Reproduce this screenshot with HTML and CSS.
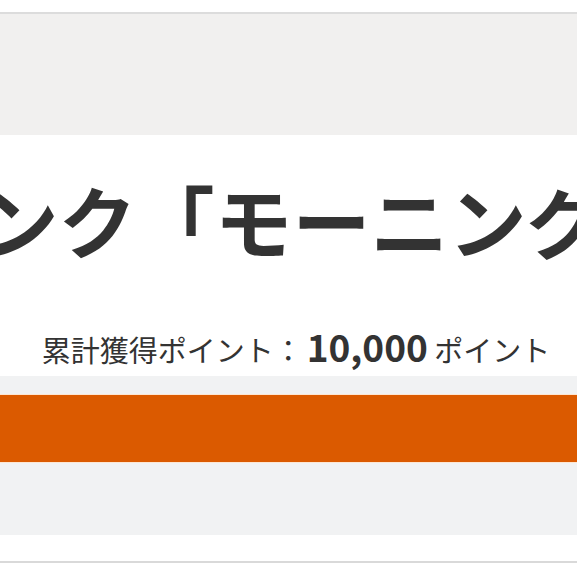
FILE: index.html
```html
<!DOCTYPE html>
<html lang="ja">
<head>
<meta charset="utf-8">
<link rel="stylesheet" href="styles.css">
</head>
<body>
<div class="top-gap"></div>
<section class="hero"></section>
<section class="card">
  <div class="title-row"><h1 class="title">ランク「モーニング」</h1></div>
  <p class="points">累計獲得ポイント：<strong class="points-num">10,000</strong> ポイント</p>
</section>
<section class="progress">
  <div class="bar"></div>
</section>
<div class="bottom-gap"></div>
<div class="footer-line"></div>
</body>
</html>
```

FILE: styles.css
```css
html, body {
  margin: 0;
  padding: 0;
  background: #ffffff;
  font-family: "Noto Sans CJK JP", "Noto Sans", sans-serif;
  color: #333333;
  overflow: hidden;
}
.top-gap { height: 12px; }
.hero {
  height: 121px;
  border-top: 2px solid #dcdcdc;
  background: #f1f0ef;
}
.card {
  height: 241px;
  background: #ffffff;
  display: flex;
  flex-direction: column;
  align-items: center;
}
.title-row {
  width: 100%;
  display: flex;
  justify-content: center;
  overflow: hidden;
  margin-top: 30px;
  padding-left: 8px;
  box-sizing: border-box;
}
.title {
  margin: 0;
  flex: none;
  white-space: nowrap;
  font-size: 78px;
  font-weight: 700;
  line-height: 1.4;
  color: #333333;
}
.points {
  margin: 50px 0 0 15px;
  font-size: 29px;
  line-height: 1.2;
  white-space: nowrap;
  color: #333333;
}
.points-num {
  font-size: 37px;
  font-weight: 700;
  margin-left: 4px;
}
.progress {
  background: #f1f2f3;
  padding: 19px 0 73px;
}
.bar {
  height: 67px;
  background: #db5a00;
  box-shadow: 0 -1px 0 #fde6d2, 0 1px 0 #fde6d2;
}
.bottom-gap { height: 26px; }
.footer-line { height: 2px; background: #d9d9d9; }
```
